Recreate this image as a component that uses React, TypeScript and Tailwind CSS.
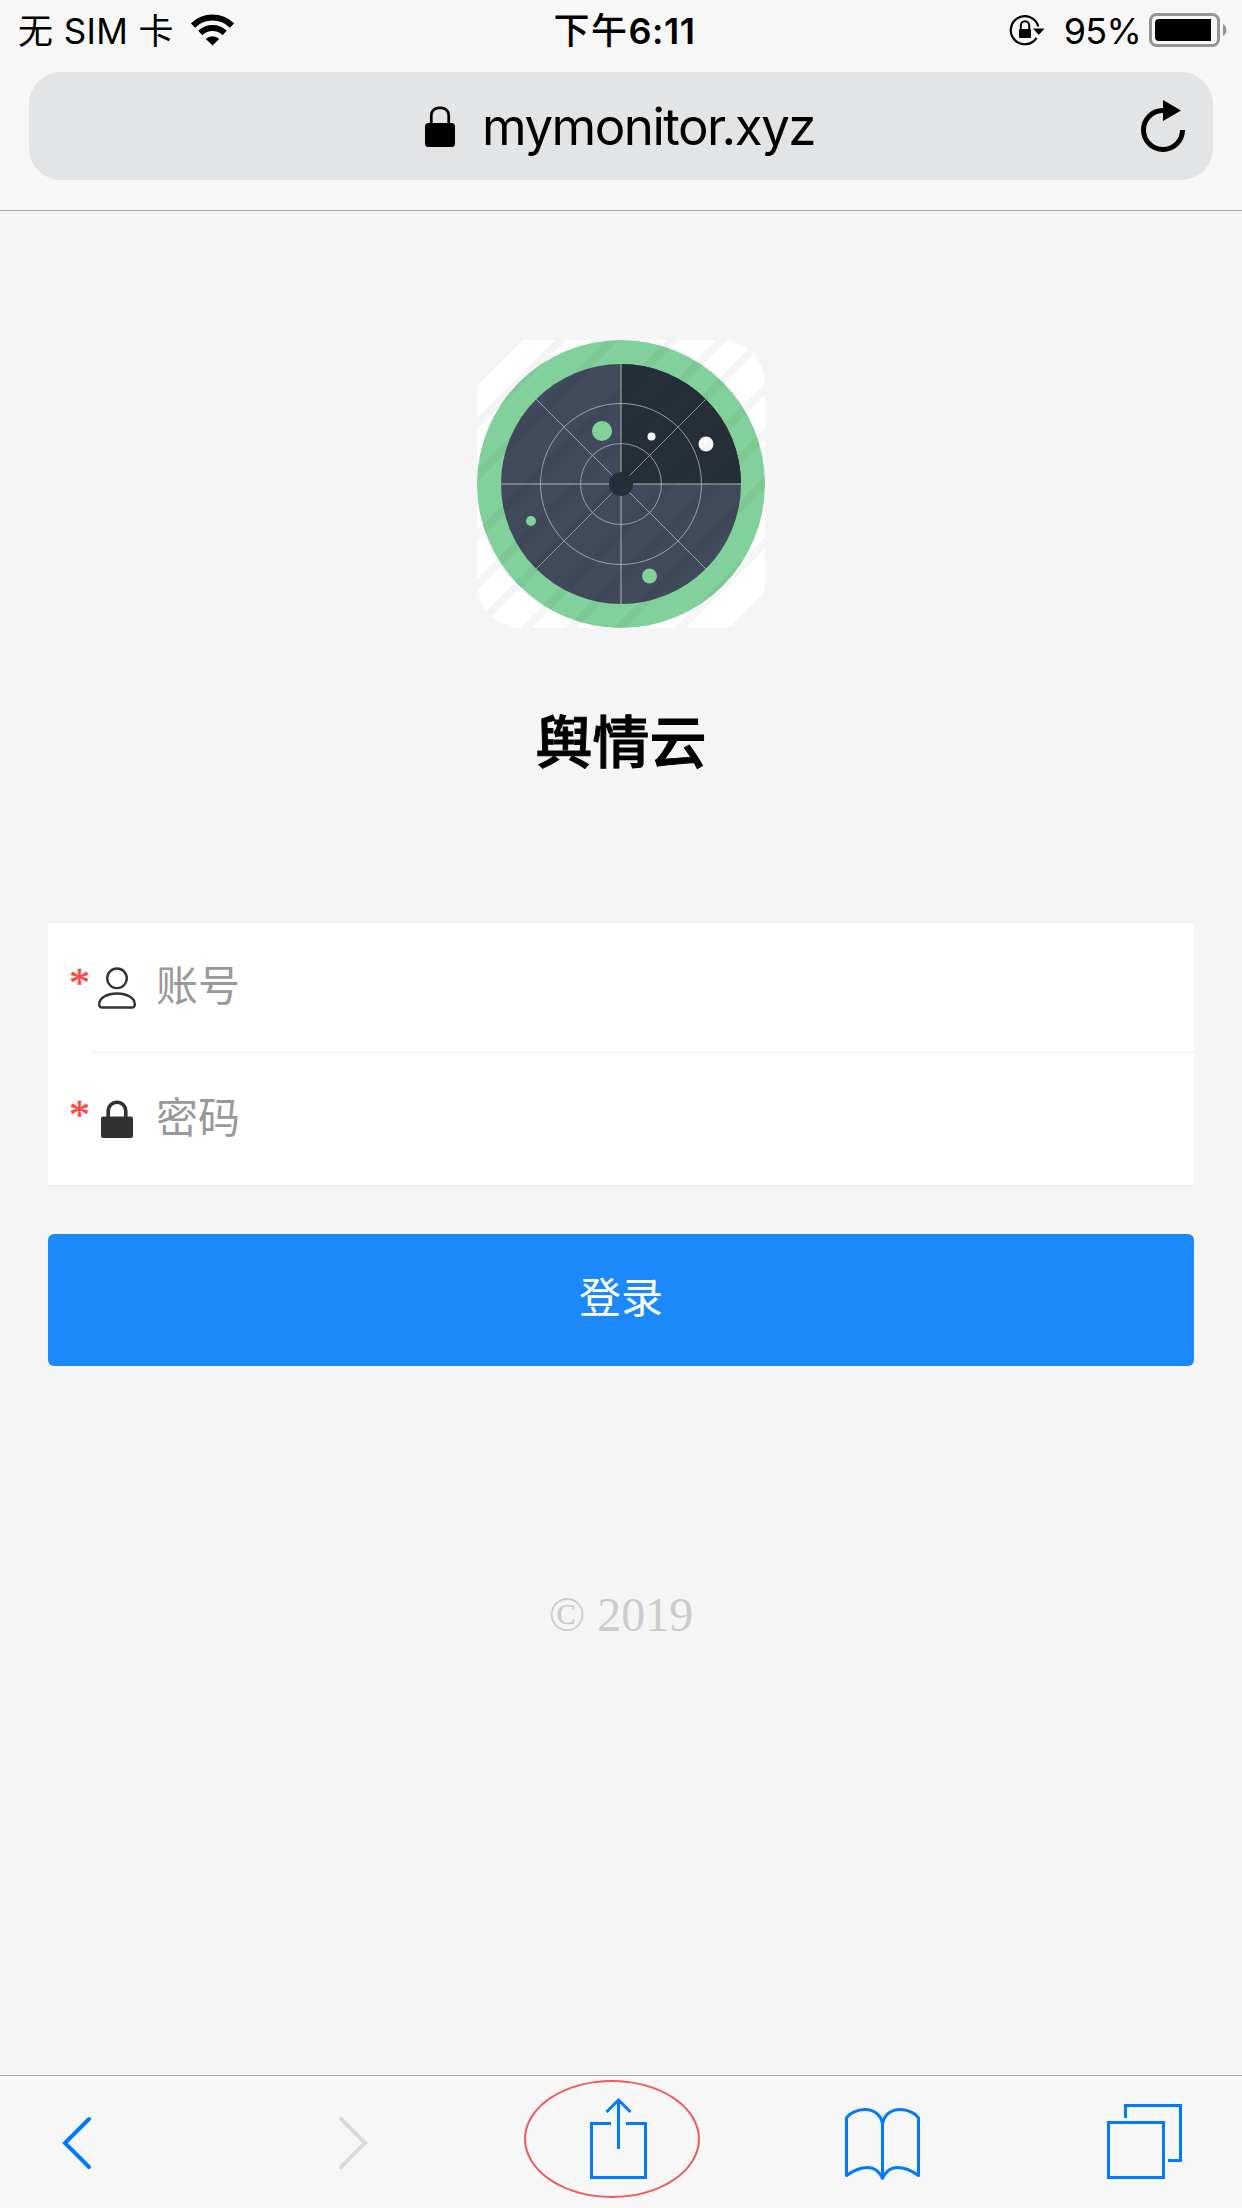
function StatusBar() {
  return (
    <div className="flex h-[72px] items-start text-[36px] leading-[60px] text-black">
      <div className="flex flex-1 items-start pl-[18px]">
        <span className="whitespace-pre pt-px text-[35px] tracking-[0.4px]">无 SIM 卡</span>
        <svg className="ml-[17px] mt-[14px] h-8 w-[43px]" viewBox="0 0 43 32" fill="none" stroke="#000">
          <path d="M2 11.5A28 28 0 0 1 41 11.5" strokeWidth="6" />
          <path d="M9.3 19A17.5 17.5 0 0 1 33.7 19" strokeWidth="6" />
          <path d="M14.8 25A9.5 9.5 0 0 1 28.2 25L21.5 31.5Z" fill="#000" stroke="none" />
        </svg>
      </div>
      <div className="w-[132px] whitespace-nowrap pt-px text-[36px] font-semibold tracking-[0.5px]">
        <span className="ml-[-4px] font-medium tracking-[1.5px]">下午</span>6:11
      </div>
      <div className="flex flex-1 items-start justify-end pr-[13px]">
        <svg className="mt-[14px] h-8 w-9" viewBox="0 0 36 32" fill="none" stroke="#000">
          <path d="M27.6 23.8A14 14 0 1 1 29.3 12.500" strokeWidth="2.2" />
          <path d="M24 14.500H35.500L29.700 21Z" fill="#000" stroke="none" />
          <path d="M11.8 16V11.500A4.2 4.2 0 0 1 20.2 11.500V16" strokeWidth="2" />
          <rect x="10" y="15" width="12" height="9" rx="1" fill="#000" stroke="none" />
        </svg>
        <span className="ml-[19px] pt-px text-[36px] tracking-[-0.8px]">95%</span>
        <svg className="ml-[8px] mt-3 h-9 w-20" viewBox="0 0 80 36">
          <rect x="1.500" y="2.500" width="68" height="31" rx="6" fill="none" stroke="#949494" strokeWidth="3" />
          <path d="M10 7H62V29H10A4 4 0 0 1 6 25V11A4 4 0 0 1 10 7Z" />
          <path d="M74 12A7 7 0 0 1 74 24Z" fill="#949494" />
        </svg>
      </div>
    </div>
  );
}

function AddressBar() {
  return (
    <div className="mx-[29px] flex h-[108px] items-center rounded-[32px] bg-[#e3e4e6]">
      <svg className="ml-[396px] mt-[-1px] h-[42px] w-[30px]" viewBox="0 0 30 42">
        <path d="M6.3 20V10A7.5 7.5 0 0 1 13.5 2.8H16.500A7.500 7.500 0 0 1 23.700 10V20" fill="none" stroke="#000" strokeWidth="2.700" />
        <rect y="18" width="30" height="24" rx="3.500" />
      </svg>
      <span className="ml-[27px] whitespace-nowrap pt-[2px] text-[51px] leading-[60px] tracking-[-1.5px] text-black">mymonitor.xyz</span>
      <svg className="ml-auto mr-[28px] h-[54px] w-[44px]" viewBox="0 0 44 54">
        <path d="M22 11.500A19.500 19.500 0 1 0 41.500 31" fill="none" stroke="#000" strokeWidth="5" />
        <path d="M22 1L40 11.500L22 22Z" />
      </svg>
    </div>
  );
}

function RadarLogo() {
  return (
    <svg className="h-[288px] w-[288px]" viewBox="0 0 288 288">
      <clipPath id="logo-clip">
        <rect width="288" height="288" rx="44" />
      </clipPath>
      <g clipPath="url(#logo-clip)">
        <rect width="288" height="288" fill="#fff" />
        <path d="M0 46L46 0H0ZM288 252L252 288H288Z" fill="#f5f5f5" />
        <circle cx="144" cy="144" r="144" fill="#82d09b" />
        <circle cx="144" cy="144" r="120" fill="#404a5a" />
        <path d="M144 24A120 120 0 0 1 264 144H144Z" fill="#262e38" />
        <g fill="none" stroke="#b4b6ba" strokeOpacity=".8" strokeWidth="1">
          <circle cx="144" cy="144" r="80.500" />
          <circle cx="144" cy="144" r="40.500" />
          <path d="M59 59L229 229M229 59L59 229" />
          <path d="M144 24V264M24 144H264" strokeWidth="2" strokeOpacity=".5" />
        </g>
        <circle cx="144" cy="144" r="12" fill="#262e38" />
        <circle cx="125" cy="91" r="10" fill="#82d09b" />
        <circle cx="54" cy="181" r="5" fill="#82d09b" />
        <circle cx="172.500" cy="236" r="7.500" fill="#82d09b" />
        <circle cx="174.500" cy="96.500" r="4" fill="#fff" />
        <circle cx="229" cy="104" r="7.500" fill="#fff" />
        <path
          d="M-5 89L89 -5M-5 141L141 -5M-5 201L201 -5M-5 250L250 -5M-5 291L291 -5M44 293L293 44M89 293L293 89M137 293L293 137M198 293L293 198"
          stroke="#222"
          strokeOpacity=".045"
          strokeWidth="8"
        />
      </g>
    </svg>
  );
}

function UserIcon() {
  return (
    <svg className="h-[42px] w-[38px]" viewBox="0 0 38 42" fill="none" stroke="#323233" strokeWidth="2.4">
      <circle cx="19" cy="11.300" r="9.800" />
      <path d="M4 40.500H34A2.800 2.800 0 0 0 36.800 37.500C37 31 29 26.500 19 26.500S1 31 1.200 37.500A2.800 2.800 0 0 0 4 40.500Z" />
    </svg>
  );
}

function PasswordIcon() {
  return (
    <svg className="h-[38px] w-[38px]" viewBox="0 0 38 38">
      <path d="M10.200 18V11A8.800 8.800 0 0 1 27.800 11V18" fill="none" stroke="#323233" strokeWidth="3.600" />
      <rect x="3" y="16.500" width="32" height="21.500" rx="2" fill="#323233" />
    </svg>
  );
}

function RequiredMark() {
  return (
    <span className="ml-[-1px] w-[29px] pb-[9px] font-['Liberation_Serif',serif] text-[42px] leading-[60px] text-[#ff4444] [-webkit-text-stroke:0.5px_#ff4444]">*</span>
  );
}

function Toolbar() {
  return (
    <div className="relative flex h-[133px] items-start border-t border-[#a9abab] bg-[#f7f7f7] pl-[60px]">
      <svg className="mt-[39px] h-14 w-8" viewBox="0 0 32 56" fill="none" stroke="#007aff" strokeWidth="4" strokeLinecap="round">
        <path d="M29 4L5 28L29 52" />
      </svg>
      <svg className="ml-[246px] mt-[39px] h-14 w-8" viewBox="0 0 32 56" fill="none" stroke="#dadada" strokeWidth="4" strokeLinecap="round">
        <path d="M3 4L27 28L3 52" />
      </svg>
      <svg className="ml-[218px] mt-[19px] h-[84px] w-[60px]" viewBox="0 0 60 84" fill="none" stroke="#007aff" strokeWidth="3">
        <path d="M23 28.500H3.500V82.500H57.500V28.500H38M30.500 54V5M18.500 17L30.500 5L42.500 17" />
      </svg>
      <svg className="ml-[196px] mt-[31px] h-[76px] w-[76px]" viewBox="0 0 76 76" fill="none" stroke="#007aff" strokeWidth="3" strokeLinejoin="round">
        <path d="M38.500 17V71.500M38.500 17C37 7 29 2.500 21 2.500C13 2.500 5 6.500 2.500 11V68.500C10 63 16 60.500 24 60.500C32 60.500 36 66 38.500 71.500C41 66 45 60.500 53 60.500C61 60.500 67 63 74.500 68.500V11C72 6.500 64 2.500 56 2.500C48 2.500 40 7 38.500 17" />
      </svg>
      <svg className="ml-[186px] mt-[28px] h-[76px] w-[77px]" viewBox="0 0 77 76" fill="none" stroke="#007aff" strokeWidth="3">
        <path d="M2.500 18.500H57.500V73.500H2.500ZM19.500 14V1.500H74.500V56.500H62" />
      </svg>
      <div className="absolute left-[524px] top-[4px] h-[118px] w-[176px] rounded-[50%] border-2 border-[#ee5a5c]" />
    </div>
  );
}

export default function App() {
  return (
    <div className="flex h-[2208px] w-[1242px] flex-col overflow-hidden bg-[#f5f5f5] font-[Inter,'Noto_Sans_CJK_SC',sans-serif]">
      <header className="h-[211px] border-b border-[#a9abab] bg-[#f7f7f7]">
        <StatusBar />
        <AddressBar />
      </header>
      <main className="flex flex-1 flex-col items-center px-12 pt-[129px]">
        <RadarLogo />
        <h1 className="mt-[73px] text-[57px] font-medium leading-[84px] text-black [-webkit-text-stroke:0.9px_#000]">舆情云</h1>
        <form className="mt-[137px] w-full border-y border-[#e8e9ec] bg-white">
          <div className="flex h-[129px] items-center pl-[22px]">
            <RequiredMark />
            <UserIcon />
            <span className="ml-[20px] pb-[3px] text-[42px] leading-[60px] text-[#999]">账号</span>
          </div>
          <div className="ml-[45px] h-px bg-[#e8e9ec]" />
          <div className="flex h-[132px] items-center pl-[22px]">
            <RequiredMark />
            <PasswordIcon />
            <span className="ml-[20px] pb-[3px] text-[42px] leading-[60px] text-[#999]">密码</span>
          </div>
        </form>
        <button className="mt-12 h-[132px] w-full rounded-md bg-[#1b89fa] pb-[5px] text-[42px] text-white" type="button">登录</button>
        <footer className="mt-[221px] font-['Liberation_Serif',serif] text-[48px] leading-[56px] text-[#ccc]">© 2019</footer>
      </main>
      <Toolbar />
    </div>
  );
}
